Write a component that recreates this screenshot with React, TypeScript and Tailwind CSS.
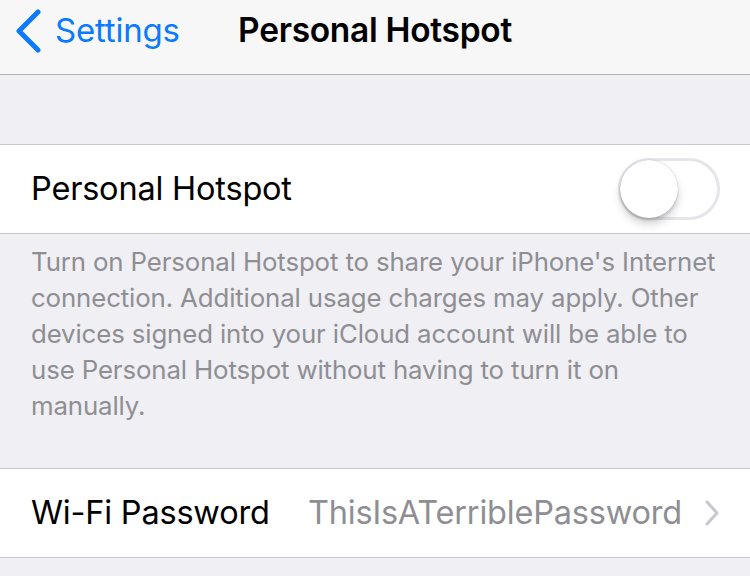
import React from "react";

const font = { fontFamily: "Inter, 'Noto Sans', 'Liberation Sans', sans-serif" };

function BackChevron() {
  return (
    <svg width="30" height="44" viewBox="0 0 30 44" className="shrink-0">
      <polyline
        points="25,3 6,22 25,41"
        fill="none"
        stroke="#0a7aff"
        strokeWidth="5"
        strokeLinecap="round"
        strokeLinejoin="round"
      />
    </svg>
  );
}

function RowChevron() {
  return (
    <svg width="16" height="26" viewBox="0 0 16 26" className="shrink-0">
      <polyline
        points="3,2 13,13 3,24"
        fill="none"
        stroke="#c7c7cc"
        strokeWidth="3"
        strokeLinecap="round"
        strokeLinejoin="round"
      />
    </svg>
  );
}

function Toggle() {
  return (
    <div className="relative h-[62px] w-[102px] rounded-full border-[3px] border-[#e5e5ea] bg-white">
      <div className="absolute left-[-1px] top-[-1px] h-[58px] w-[58px] rounded-full bg-white shadow-[0_6px_8px_rgba(0,0,0,0.18),0_0_1px_rgba(0,0,0,0.35),0_3px_2px_rgba(0,0,0,0.08)]" />
    </div>
  );
}

const footerLines = [
  "Turn on Personal Hotspot to share your iPhone's Internet",
  "connection. Additional usage charges may apply. Other",
  "devices signed into your iCloud account will be able to",
  "use Personal Hotspot without having to turn it on",
  "manually.",
];

export default function App() {
  return (
    <div className="h-[576px] w-[750px] overflow-hidden bg-[#efeff4]" style={font}>
      {/* navigation bar */}
      <div className="relative flex h-[75px] items-center border-b border-[#b2b2b2] bg-[#f7f7f8] pb-[13px]">
        <div className="flex items-center pl-[13px]">
          <BackChevron />
          <span className="ml-[12px] text-[33px] leading-none tracking-[-0.2px] text-[#0a7aff]">Settings</span>
        </div>
        <div className="pointer-events-none absolute inset-x-0 top-0 flex h-full items-center justify-center pb-[13px]">
          <span className="text-[33.5px] font-semibold leading-none tracking-[-0.3px] text-black">Personal Hotspot</span>
        </div>
      </div>

      {/* spacer */}
      <div className="h-[69px]" />

      {/* personal hotspot switch row */}
      <div className="flex h-[90px] items-center justify-between border-y border-[#c8c7cc] bg-white pl-[31px] pr-[30px]">
        <span className="text-[32.5px] leading-none tracking-[-0.2px] text-black">Personal Hotspot</span>
        <Toggle />
      </div>

      {/* footer note */}
      <div className="px-[31px] pb-[44px] pt-[10px]">
        <p className="whitespace-nowrap text-[25.8px] leading-[36px] tracking-[-0.12px] text-[#8e8e93]">
          {footerLines.map((line, i) => (
            <React.Fragment key={i}>
              {line}
              {i < footerLines.length - 1 && <br />}
            </React.Fragment>
          ))}
        </p>
      </div>

      {/* wi-fi password row */}
      <div className="flex h-[90px] items-center border-y border-[#c8c7cc] bg-white pl-[31px] pr-[30px]">
        <span className="text-[32.5px] leading-none tracking-[-0.2px] text-black">Wi-Fi Password</span>
        <span className="ml-auto text-[32.5px] leading-none tracking-[-0.2px] text-[#8e8e93]">ThisIsATerriblePassword</span>
        <span className="ml-[22px] flex">
          <RowChevron />
        </span>
      </div>
    </div>
  );
}
